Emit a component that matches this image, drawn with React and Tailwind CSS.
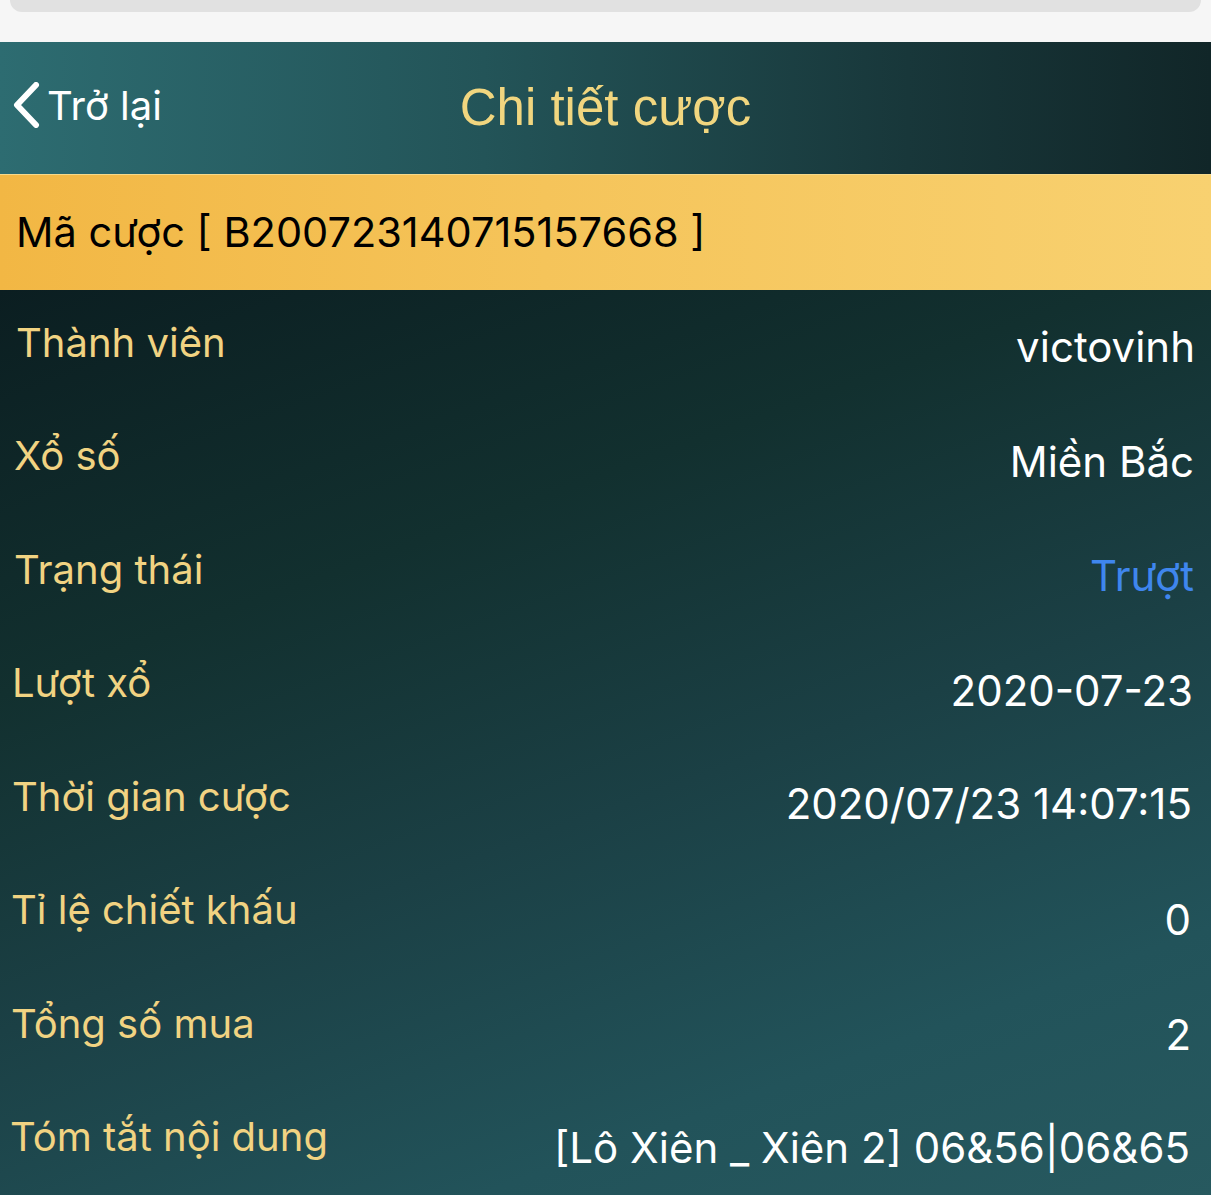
import React from "react";

const rows = [
  { label: "Thành viên", value: "victovinh", lp: "pl-[16px]", vo: "mt-[8px]", vr: "pr-[16px]", blue: false },
  { label: "Xổ số", value: "Miền Bắc", lp: "pl-[14px]", vo: "mt-[11px]", vr: "pr-[17px]", blue: false },
  { label: "Trạng thái", value: "Trượt", lp: "pl-[14px]", vo: "mt-[13px]", vr: "pr-[17px]", blue: true },
  { label: "Lượt xổ", value: "2020-07-23", lp: "pl-[12px]", vo: "mt-[15px]", vr: "pr-[18px]", blue: false },
  { label: "Thời gian cược", value: "2020/07/23 14:07:15", lp: "pl-[12px]", vo: "mt-[15px]", vr: "pr-[19px]", blue: false },
  { label: "Tỉ lệ chiết khấu", value: "0", lp: "pl-[11px]", vo: "mt-[20px]", vr: "pr-[20px]", blue: false },
  { label: "Tổng số mua", value: "2", lp: "pl-[11px]", vo: "mt-[22px]", vr: "pr-[20px]", blue: false },
  { label: "Tóm tắt nội dung", value: "[Lô Xiên _ Xiên 2] 06&56|06&65", lp: "pl-[10px]", vo: "mt-[22px]", vr: "pr-[21px]", blue: false },
];

export default function App() {
  return (
    <div className="w-[1211px] h-[1195px] overflow-hidden flex flex-col bg-[#f6f6f6]" style={{ fontFamily: "Inter, 'Noto Sans', sans-serif" }}>
      {/* top status strip */}
      <div className="h-[42px] shrink-0 px-[10px] bg-[#f6f6f6]">
        <div className="h-[12px] rounded-b-[16px] bg-[#e1e1e1]" />
      </div>

      {/* header */}
      <div className="h-[132px] shrink-0 relative flex items-center bg-[linear-gradient(90deg,#2d6c71_0%,#235458_40%,#18373a_75%,#112628_100%)]">
        <div className="flex items-center pl-[11px] text-white">
          <svg width="30" height="46" viewBox="0 0 30 46" className="mt-[-6px]">
            <path d="M25 3 L6 23 L25 43" fill="none" stroke="white" strokeWidth="6" strokeLinecap="round" strokeLinejoin="round" />
          </svg>
          <span className="ml-[6px] text-[40px] leading-none mt-[-4px]">Trở lại</span>
        </div>
        <div className="absolute left-0 right-0 top-0 bottom-0 flex items-center justify-center pointer-events-none">
          <span className="text-[51px] leading-none text-[#f1d67f] mt-[-2px]" style={{ fontFamily: "'Liberation Sans', Arial, sans-serif" }}>
            Chi tiết cược
          </span>
        </div>
      </div>

      {/* bet code bar */}
      <div className="h-[116px] shrink-0 flex items-center pl-[16px] border-t border-[#f7d98a] bg-[linear-gradient(90deg,#f2b744_0%,#f5c45a_45%,#f8d170_100%)]">
        <span className="text-[41.5px] leading-none text-black">Mã cược [ B200723140715157668 ]</span>
      </div>

      {/* details */}
      <div className="flex-1 flex flex-col bg-[linear-gradient(160deg,#0b1e21_0%,#12302f_30%,#1b4045_55%,#22535a_80%,#27595f_100%)]">
        {rows.map((r, i) => (
          <div key={i} className={`h-[113.5px] shrink-0 pb-[8px] flex items-center justify-between ${r.lp} ${r.vr}`}>
            <span className="text-[40px] leading-none text-[#f1d382]">{r.label}</span>
            <span className={`text-[42px] leading-none ${r.vo} ${r.blue ? "text-[#3f86ee]" : "text-white"}`}>{r.value}</span>
          </div>
        ))}
      </div>
    </div>
  );
}
